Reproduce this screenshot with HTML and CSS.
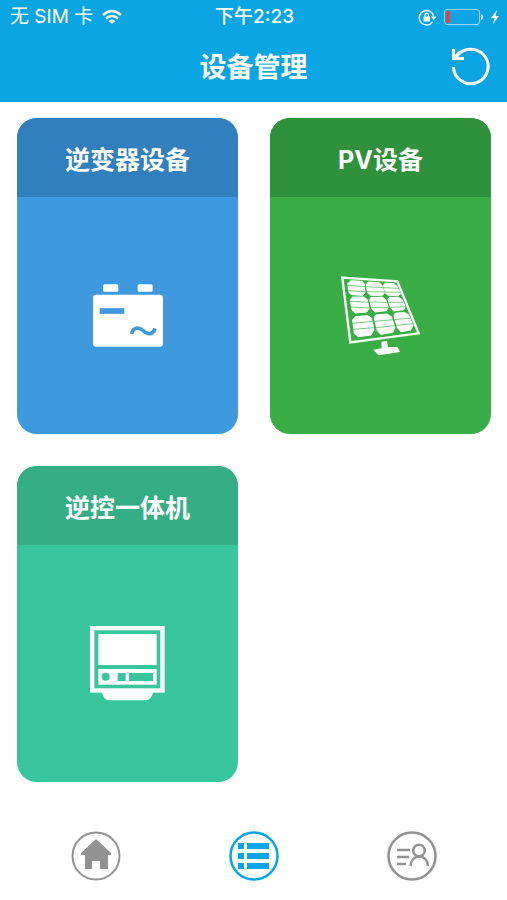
FILE: index.html
```html
<!DOCTYPE html>
<html lang="zh-CN">
  <head>
    <meta charset="utf-8">
    <meta name="viewport" content="width=device-width, initial-scale=1">
    <title>设备管理</title>
    <link rel="stylesheet" href="styles.css">
  </head>
  <body>
    <header>
      <div class="status">
        <div class="carrier">
          <span>无 SIM 卡</span>
          <svg class="wifi" width="20" height="16" viewBox="0 0 20 16" fill="none" stroke="currentColor" stroke-width="2.5">
            <path d="M1 6Q10-2 19 6M4 9.500Q10 4.500 16 9.500"/>
            <path d="M6.500 12Q10 9 13.500 12L10 15Z" fill="currentColor" stroke="none"/>
          </svg>
        </div>
        <time>下午2:23</time>
        <div class="power">
          <svg width="19" height="17" viewBox="0 0 19 17" fill="none" stroke="currentColor" stroke-width="1.3">
            <path d="M14.500 12.800A7.200 7.200 0 1 1 15.700 8"/>
            <path d="M13 7.500h5.500L15.700 11Z" fill="currentColor" stroke="none"/>
            <rect x="5.500" y="7.500" width="6.500" height="5" rx=".5" fill="currentColor" stroke="none"/>
            <path d="M7 8V6.200a1.700 1.700 0 0 1 3.500 0V8"/>
          </svg>
          <svg width="40" height="16" viewBox="0 0 40 16">
            <rect x=".5" y=".5" width="35" height="15" rx="2.500" fill="none" stroke="#8fd6f5"/>
            <rect x="2" y="2" width="4" height="12" rx="1" fill="#df4350"/>
            <path d="M37 5q2 .5 2 3t-2 3Z" fill="currentColor"/>
          </svg>
          <svg width="8" height="14" viewBox="0 0 8 14">
            <path d="M6 0L0 8h3.500L2 14l6-8H4.500Z" fill="currentColor"/>
          </svg>
        </div>
      </div>
      <div class="navbar">
        <h1>设备管理</h1>
        <button class="refresh" type="button" aria-label="刷新">
          <svg width="38" height="38" viewBox="0 0 38 38" fill="none" stroke="currentColor" stroke-width="3">
            <path d="M1.500 20A17.300 17.300 0 1 0 4 10.500"/>
            <path d="M1.500 2V11.500H12M2 11L8 5"/>
          </svg>
        </button>
      </div>
    </header>

    <main>
      <a class="card inverter" href="#inverter">
        <h2>逆变器设备</h2>
        <div class="picture">
          <svg width="70" height="63" viewBox="37 40 210 188" fill="#fff">
            <rect x="67" y="40" width="46" height="23" rx="5"/>
            <rect x="171" y="40" width="45" height="23" rx="5"/>
            <rect x="37" y="72" width="210" height="156" rx="10"/>
            <rect class="cut" x="57" y="112" width="74" height="17"/>
            <path class="cut-line" d="M153 189C157 170 174 167 187 179S215 195 223 173"/>
          </svg>
        </div>
      </a>

      <a class="card pv" href="#pv">
        <h2>PV设备</h2>
        <div class="picture">
          <svg width="79" height="80" viewBox="32 32 237 240" fill="#fff">
            <path d="M36 37L201 48L265 204L60 231Z" fill="none" stroke="#fff" stroke-width="7"/>
            <g stroke="#fff" stroke-width="3" stroke-linejoin="round">
              <path d="M62 46L95 48L102 56L104 83L97 90L64 88L56 82L52 55Z"/>
              <path d="M114 50L146 52L155 60L162 84L154 91L121 90L112 82L108 57Z"/>
              <path d="M164 54L190 55L200 63L211 85L203 91L174 90L166 84L159 60Z"/>
              <path d="M67 95L100 95L111 103L116 129L109 140L76 143L65 134L60 104Z"/>
              <path d="M122 96L157 96L166 103L174 126L168 136L134 140L125 131L118 104Z"/>
              <path d="M178 96L204 96L215 103L225 124L220 133L190 137L181 127L173 103Z"/>
              <path d="M75 154L112 151L123 158L131 193L122 209L84 214L72 204L67 164Z"/>
              <path d="M136 149L170 146L183 154L194 187L187 201L151 207L141 196L132 158Z"/>
              <path d="M194 144L221 141L234 148L248 180L241 194L212 199L202 188L191 153Z"/>
            </g>
            <path class="seam" d="M50 60L106 64M52 76L109 79M108 64L160 67M110 79L163 80M160 67L206 69M164 80L211 81M58 108L116 111M61 125L120 128M118 110L171 111M122 127L176 126M173 111L220 111M179 126L227 124M67 174L128 168M69 192L131 187M134 168L189 163M138 187L194 181M192 163L241 158M198 180L248 175"/>
            <path d="M153 229L170 227L173 246L202 245L209 260L145 270L129 253L154 249Z"/>
          </svg>
        </div>
      </a>

      <a class="card combo" href="#combo">
        <h2>逆控一体机</h2>
        <div class="picture">
          <svg width="75" height="75" viewBox="30 36 225 225" fill="#fff">
            <path d="M65 230H220Q216 259 196 259H89Q69 259 65 230Z"/>
            <rect x="30" y="36" width="224" height="200"/>
            <rect class="cut" x="43" y="49" width="198" height="174"/>
            <rect x="55" y="60" width="175" height="93"/>
            <rect x="55" y="165" width="175" height="47"/>
            <circle class="cut" cx="77" cy="188" r="12"/>
            <rect class="cut" x="113" y="177" width="24" height="24"/>
            <rect class="cut" x="147" y="177" width="72" height="24"/>
          </svg>
        </div>
      </a>
    </main>

    <nav class="tabs">
      <a href="#home" aria-label="首页">
        <svg width="50" height="50" viewBox="0 0 50 50" fill="none" stroke="currentColor" stroke-width="2">
          <circle cx="25" cy="25" r="23.500"/>
          <path d="M25 8L40 22Q41 24 38 24H37V38H29V30H21V38H14V24H12Q9 24 10 22Z" fill="currentColor" stroke="none"/>
        </svg>
      </a>
      <a class="active" href="#devices" aria-label="设备">
        <svg width="50" height="50" viewBox="0 0 50 50" fill="currentColor">
          <circle cx="25" cy="25" r="23.500" fill="none" stroke="currentColor" stroke-width="2.5"/>
          <path d="M9 12h6v6H9zM18 12h22v6H18zM9 22h6v6H9zM18 22h22v6H18zM9 32h6v6H9zM18 32h22v6H18z"/>
        </svg>
      </a>
      <a href="#account" aria-label="我的">
        <svg width="50" height="50" viewBox="0 0 50 50" fill="none" stroke="currentColor" stroke-width="2.5">
          <circle cx="25" cy="25" r="23.500"/>
          <path d="M10 19h13M10 26h12M10 33h9"/>
          <circle cx="32" cy="19.500" r="5.800"/>
          <path d="M23.500 35a8.700 9.500 0 0 1 17.500 0"/>
        </svg>
      </a>
    </nav>
  </body>
</html>
```

FILE: styles.css
```css
* {
  box-sizing: border-box;
}

body {
  margin: 0;
  min-height: 100vh;
  display: flex;
  flex-direction: column;
  background: #fff;
  color: #fff;
  font-family: Inter, 'Noto Sans CJK SC', sans-serif;
}

h1, h2 {
  margin: 0;
  font-weight: 700;
}

svg {
  display: block;
}

/* header */
header {
  background: #0aa5e2;
}

.status {
  display: grid;
  grid-template-columns: 1fr auto 1fr;
  align-items: center;
  height: 34px;
  padding: 0 8px 0 10px;
  font-size: 19px;
  line-height: 34px;
}

.status time {
  font-weight: 500;
}

.carrier, .power {
  display: flex;
  align-items: center;
}

.carrier {
  gap: 9px;
}

.power {
  justify-content: flex-end;
  gap: 7px;
}

.navbar {
  display: grid;
  grid-template-columns: 1fr auto 1fr;
  align-items: center;
  height: 68px;
  padding: 0 17px;
}

.navbar h1 {
  grid-column: 2;
  font-size: 27px;
  line-height: 40px;
}

.refresh {
  justify-self: end;
  padding: 0 0 4px;
  border: none;
  background: none;
  color: inherit;
  cursor: pointer;
}

/* device cards */
main {
  flex: 1;
  display: grid;
  grid-template-columns: 1fr 1fr;
  align-content: start;
  gap: 32px;
  padding: 16px 16px 16px 17px;
}

.card {
  display: flex;
  flex-direction: column;
  border-radius: 20px;
  overflow: hidden;
  background: var(--body);
  color: inherit;
  text-decoration: none;
}

.card h2 {
  padding: 23px 0 17px;
  background: var(--head);
  font-size: 25px;
  line-height: 39px;
  text-align: center;
}

.picture {
  display: flex;
  align-items: center;
  justify-content: center;
  height: 237px;
}

.inverter { --head: #327fbe; --body: #3f99df; }
.pv { --head: #2f913b; --body: #3bad47; }
.combo { --head: #35ae86; --body: #3ac69c; }

.cut {
  fill: var(--body);
}

.cut-line {
  fill: none;
  stroke: var(--body);
  stroke-width: 11;
}

.seam {
  fill: none;
  stroke: var(--body);
  stroke-width: 2;
}

/* bottom tabs */
.tabs {
  display: flex;
  padding: 16px 16px 19px 17px;
}

.tabs a {
  flex: 1;
  display: flex;
  justify-content: center;
  color: #929292;
}

.tabs .active {
  color: #0aa5e2;
}
```
